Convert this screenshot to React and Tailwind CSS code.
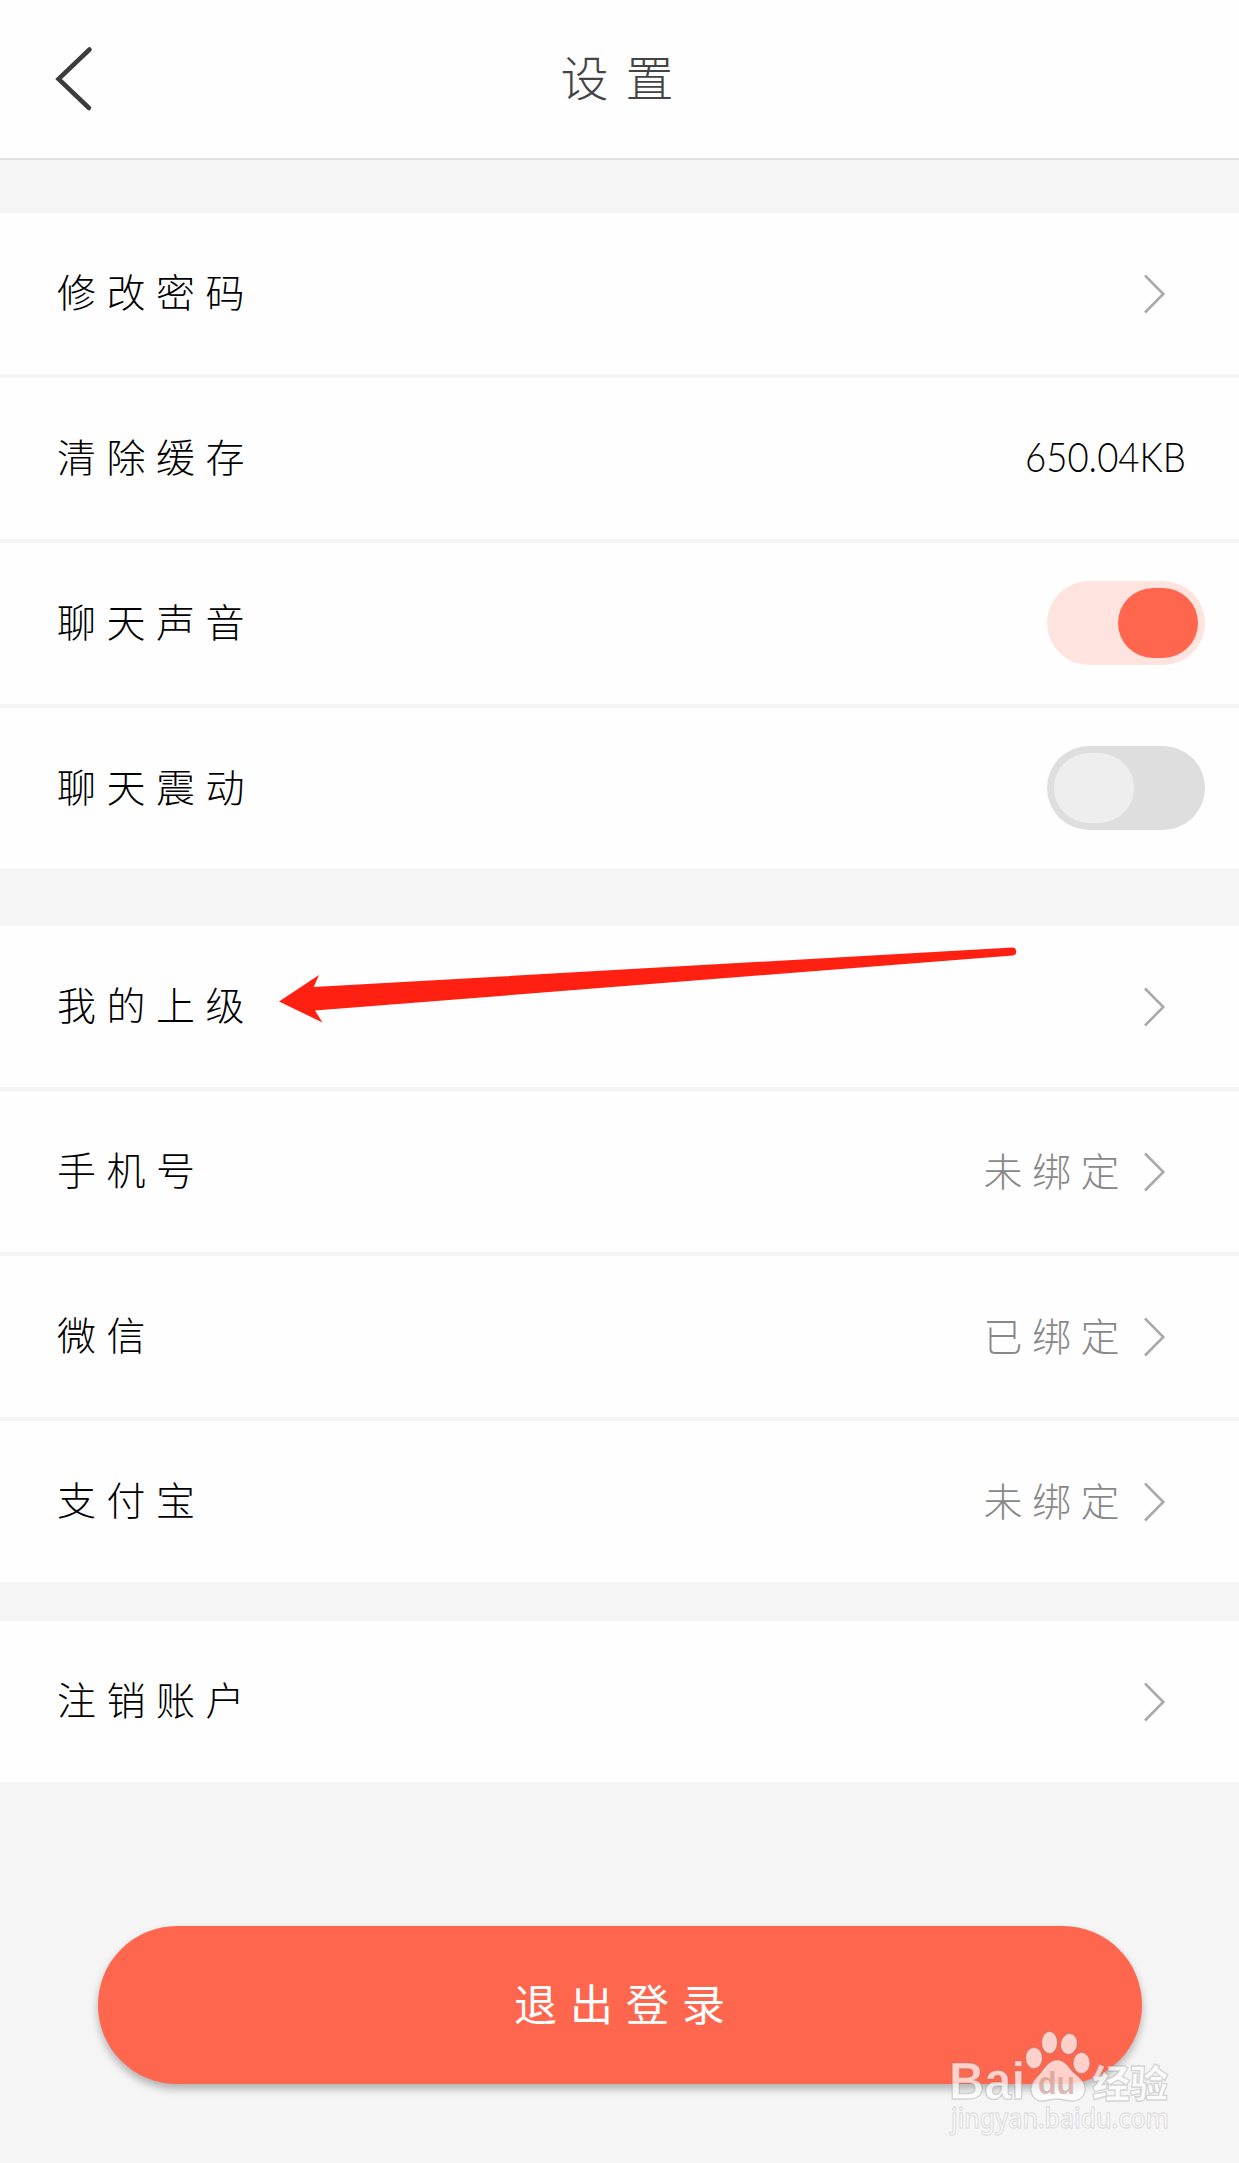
import React, { useState } from 'react'
import clsx from 'clsx'

const groups = [
  {
    id: 'general',
    className: 'mt-[53px]',
    rows: [
      { id: 'password', label: '修改密码', type: 'link' },
      { id: 'cache', label: '清除缓存', type: 'value', value: '650.04KB' },
      { id: 'sound', label: '聊天声音', type: 'switch' },
      { id: 'vibrate', label: '聊天震动', type: 'switch' },
    ],
  },
  {
    id: 'account',
    className: 'mt-[57px]',
    rows: [
      { id: 'parent', label: '我的上级', type: 'link', marked: true },
      { id: 'phone', label: '手机号', type: 'link', status: '未绑定' },
      { id: 'wechat', label: '微信', type: 'link', status: '已绑定' },
      { id: 'alipay', label: '支付宝', type: 'link', status: '未绑定' },
    ],
  },
  {
    id: 'cancel',
    className: 'mt-[39px]',
    rows: [{ id: 'close', label: '注销账户', type: 'link' }],
  },
]

function Chevron() {
  return (
    <svg className="w-[24px] h-[42px]" viewBox="0 0 24 42" fill="none" stroke="#aaaaaa" strokeWidth="2.6">
      <path d="M3 2.5 L21.3 21 L3 39.5" />
    </svg>
  )
}

function Switch({ on, onChange }) {
  return (
    <button
      onClick={() => onChange(!on)}
      className={clsx(
        'flex items-center w-[158px] h-[84px] px-[7px] rounded-full mr-[34px] mb-px',
        on ? 'bg-[#ffe3df] justify-end' : 'bg-[#dedede] justify-start'
      )}
    >
      <span className={clsx('w-[80px] h-[70px] rounded-[36px]', on ? 'bg-[#ff664e]' : 'bg-[#eeeeee]')} />
    </button>
  )
}

// Hand-drawn pointer over the "我的上级" row
function Pointer() {
  return (
    <svg className="absolute left-[278px] top-[18px] w-[742px] h-[82px]" viewBox="278 944 742 82" fill="#ff2012">
      <path d="M279 1001.5 L319 975 L313.7 987 L1012.5 947.6 A4 4 0 0 1 1013 955.5 L315 1010.5 L322.5 1022.5 Z" />
    </svg>
  )
}

function Row({ row, on, onToggle }) {
  return (
    <div className="relative flex items-center justify-between h-[161px] bg-[#fefefe] pl-[57px]">
      <span className="mb-[6px] text-[39px] leading-none tracking-[10.5px] text-black">{row.label}</span>
      {row.type === 'switch' && <Switch on={on} onChange={onToggle} />}
      {row.type === 'value' && (
        <span className="mb-[6px] mr-[53px] origin-right scale-x-[0.87] font-['Lato'] font-light text-[42px] leading-none text-black">
          {row.value}
        </span>
      )}
      {row.type === 'link' && (
        <div className="flex items-center mr-[73px]">
          {row.status && (
            <span className="mb-[4px] text-[39px] leading-none tracking-[9.5px] text-[#888888] mr-[13px]">{row.status}</span>
          )}
          <Chevron />
        </div>
      )}
      {row.marked && <Pointer />}
    </div>
  )
}

function Watermark() {
  return (
    <svg className="absolute left-[930px] top-[2022px] w-[260px] h-[134px]" viewBox="930 2022 260 134">
      <g fill="#ffffff" fillOpacity="0.7" stroke="#777777" strokeOpacity="0.28" strokeWidth="1.4">
        <text x="949" y="2099" fontFamily="Liberation Sans" fontWeight="700" fontSize="51" textLength="76" lengthAdjust="spacingAndGlyphs">Bai</text>
        <ellipse cx="1034" cy="2058" rx="8.3" ry="10.5" />
        <ellipse cx="1049.5" cy="2042.5" rx="7.8" ry="11" />
        <ellipse cx="1069" cy="2044" rx="8.2" ry="10.5" transform="rotate(10 1069 2044)" />
        <ellipse cx="1081.5" cy="2063" rx="8.3" ry="10.5" />
        <path d="M1057 2060 C1064 2060 1068 2066 1072 2071 C1077 2076 1085 2080 1085 2089 C1085 2097 1079 2101 1072 2101 C1066 2101 1063 2099 1057 2099 C1051 2099 1048 2101 1042 2101 C1035 2101 1031 2096 1031 2089 C1031 2081 1038 2077 1042 2071 C1046 2066 1050 2060 1057 2060 Z" />
        <text x="1092" y="2097" fontFamily="Noto Sans CJK SC" fontWeight="900" fontSize="38" textLength="76" lengthAdjust="spacingAndGlyphs">经验</text>
        <text x="951" y="2128" fontFamily="Noto Sans" fontWeight="500" fontSize="27" strokeOpacity="0.2" textLength="218" lengthAdjust="spacingAndGlyphs">jingyan.baidu.com</text>
      </g>
      <text x="1038" y="2094" fontFamily="Liberation Sans" fontWeight="700" fontSize="31" fill="#c98f86" fillOpacity="0.6" textLength="37" lengthAdjust="spacingAndGlyphs">du</text>
    </svg>
  )
}

export default function App() {
  const [switches, setSwitches] = useState({ sound: true, vibrate: false })

  return (
    <div className="relative w-[1239px] h-[2163px] overflow-hidden bg-[#f5f5f5] font-['Noto_Sans_CJK_SC',sans-serif] font-light">
      <header className="relative flex items-center justify-center h-[160px] bg-[#fefefe] border-b-2 border-[#e2e2e2]">
        <button className="absolute left-[54px] top-[45px]">
          <svg className="w-[40px] h-[68px]" viewBox="0 0 40 68" fill="none" stroke="#3c3c3c" strokeWidth="4.5" strokeLinecap="round">
            <path d="M35.5 4.5 L4.5 34 L35 63" />
          </svg>
        </button>
        <h1 className="mb-[8px] pl-[12px] text-[48px] leading-none tracking-[17px] text-[#444444]">设置</h1>
      </header>

      {groups.map(group => (
        <section key={group.id} className={clsx('flex flex-col gap-[4px]', group.className)}>
          {group.rows.map(row => (
            <Row
              key={row.id}
              row={row}
              on={switches[row.id]}
              onToggle={v => setSwitches(s => ({ ...s, [row.id]: v }))}
            />
          ))}
        </section>
      ))}

      <button className="flex items-center justify-center w-[1044px] h-[158px] mt-[144px] ml-[98px] pl-[12px] rounded-full bg-[#ff664e] shadow-[0_5px_9px_rgba(0,0,0,0.28)]">
        <span className="mb-[6px] text-[43px] leading-none tracking-[13px] font-normal text-white">退出登录</span>
      </button>

      <Watermark />
    </div>
  )
}
